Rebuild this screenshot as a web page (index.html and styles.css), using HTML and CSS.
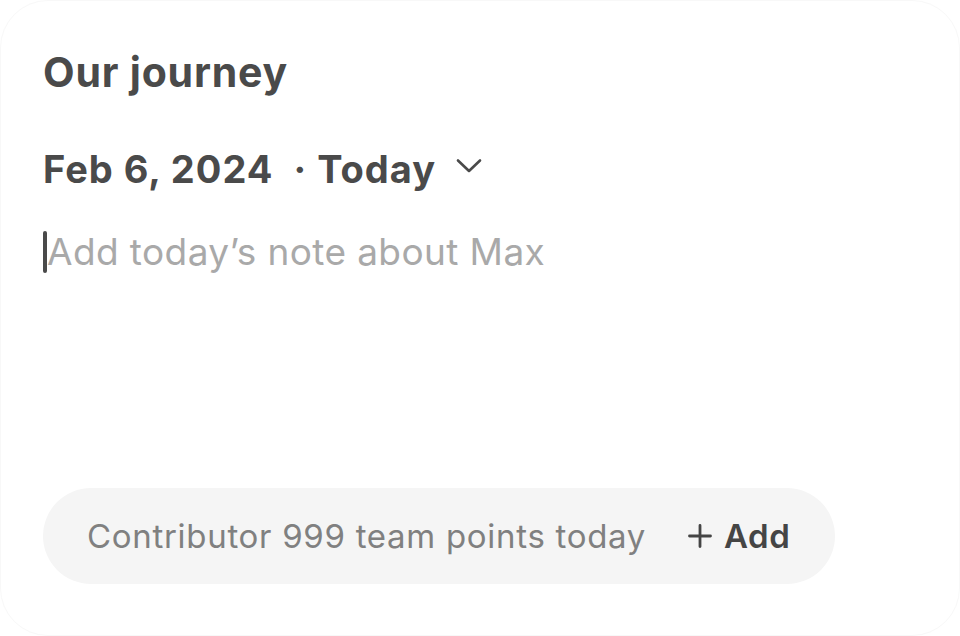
FILE: index.html
```html
<!DOCTYPE html>
<html>
<head>
<meta charset="utf-8">
<link rel="stylesheet" href="styles.css">
</head>
<body>
<div class="card">
  <h1 class="title">Our journey</h1>
  <div class="date-row">
    <span class="date">Feb 6, 2024</span>
    <span class="today">· Today</span>
    <svg class="chev" width="26" height="16" viewBox="0 0 26 16"><path d="M2 2.5 L13 13 L24 2.5" fill="none" stroke="#4a4a4a" stroke-width="2.6" stroke-linecap="round" stroke-linejoin="round"/></svg>
  </div>
  <div class="note"><span class="caret"></span><span class="placeholder">Add today’s note about Max</span></div>
  <div class="pill">
    <span class="pill-text">Contributor 999 team points today</span>
    <span class="add">
      <svg class="plus" width="24" height="24" viewBox="0 0 24 24"><path d="M12 1.5 V22.5 M1.5 12 H22.5" fill="none" stroke="#454545" stroke-width="2.8" stroke-linecap="round"/></svg>
      <span class="add-label">Add</span>
    </span>
  </div>
</div>
</body>
</html>
```
FILE: styles.css
```css
html, body {
  margin: 0;
  padding: 0;
  background: #ffffff;
}
body {
  width: 960px;
  height: 636px;
  font-family: Inter, "Noto Sans", sans-serif;
}
.card {
  box-sizing: border-box;
  width: 960px;
  height: 636px;
  border: 1px solid #f8f8f8;
  border-radius: 48px;
  padding: 46px 42px 0 42px;
  display: flex;
  flex-direction: column;
  color: #4a4a4a;
}
.title {
  margin: 0;
  font-size: 41px;
  font-weight: 700;
  line-height: 50px;
  letter-spacing: 0.8px;
}
.date-row {
  margin-top: 48px;
  display: flex;
  align-items: center;
  font-size: 38px;
  font-weight: 700;
  line-height: 48px;
  letter-spacing: 1px;
}
.today {
  margin-left: 20px;
}
.chev {
  margin-left: 20px;
  margin-top: -6px;
}
.note {
  margin-top: 36px;
  display: flex;
  align-items: center;
  height: 46px;
}
.caret {
  width: 4px;
  height: 42px;
  border-radius: 2px;
  background: #4a4a4a;
}
.placeholder {
  font-size: 37px;
  color: #a9a9a9;
  line-height: 46px;
  letter-spacing: 0.4px;
}
.pill {
  margin-top: 213px;
  width: 792px;
  height: 96px;
  box-sizing: border-box;
  border-radius: 48px;
  background: #f5f5f5;
  display: flex;
  align-items: center;
  padding: 0 30px 0 44px;
  white-space: nowrap;
}
.pill-text {
  flex-shrink: 0;
  font-size: 33px;
  color: #808080;
  letter-spacing: 0.7px;
}
.add {
  flex-shrink: 0;
  margin-left: 42px;
  display: flex;
  align-items: center;
  font-size: 33px;
  font-weight: 600;
  color: #454545;
  letter-spacing: 0.5px;
}
.add-label {
  margin-left: 12px;
}
```
